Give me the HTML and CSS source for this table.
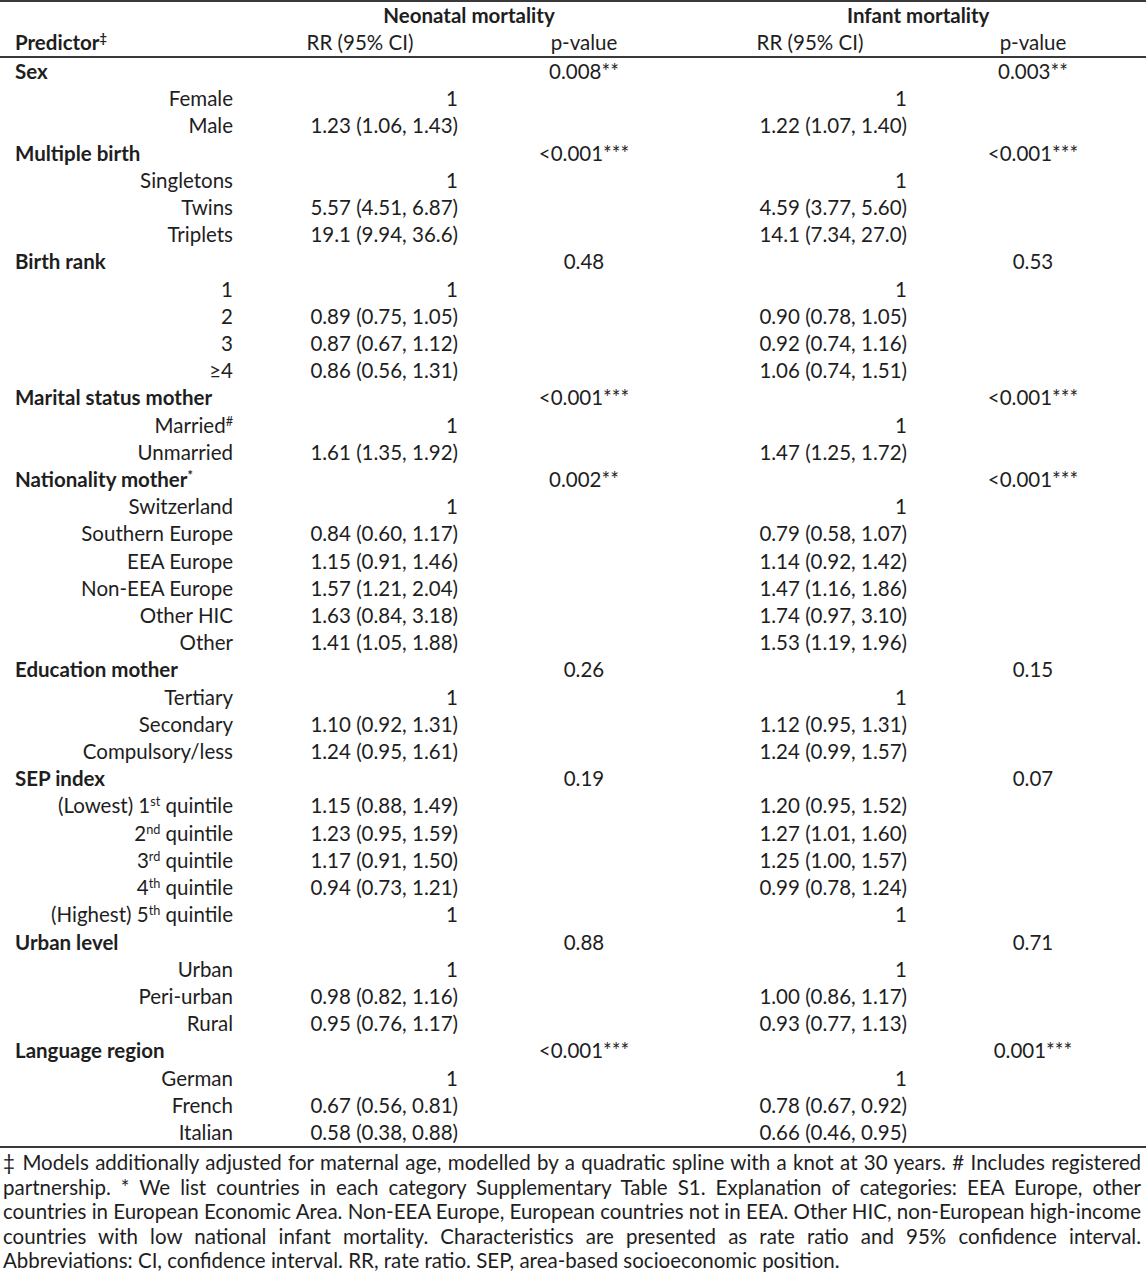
FILE: index.html
```html
<!DOCTYPE html>
<html lang="en">
<head>
<meta charset="utf-8">
<title>Rate ratios for neonatal and infant mortality</title>
<link rel="stylesheet" href="styles.css">
</head>
<body>
<table class="rr-table">
  <colgroup>
    <col class="c-label">
    <col class="c-rr1">
    <col class="c-p1">
    <col class="c-rr2">
    <col class="c-p2">
    <col class="c-rest">
  </colgroup>
  <thead>
    <tr class="group-row">
      <th></th>
      <th colspan="2" class="group g1">Neonatal mortality</th>
      <th colspan="3" class="group g2">Infant mortality</th>
    </tr>
    <tr class="head-row">
      <th class="pred">Predictor<sup>‡</sup></th>
      <th class="hc">RR (95% CI)</th>
      <th class="hc">p-value</th>
      <th class="hc">RR (95% CI)</th>
      <th class="hc">p-value</th>
      <th></th>
    </tr>
  </thead>
  <tbody>
    <tr class="cat"><td>Sex</td><td></td><td class="p">0.008**</td><td></td><td class="p">0.003**</td><td></td></tr>
    <tr><td class="lvl">Female</td><td class="rr">1</td><td></td><td class="rr2">1</td><td></td><td></td></tr>
    <tr><td class="lvl">Male</td><td class="rr">1.23 (1.06, 1.43)</td><td></td><td class="rr2">1.22 (1.07, 1.40)</td><td></td><td></td></tr>

    <tr class="cat"><td>Multiple birth</td><td></td><td class="p">&lt;0.001***</td><td></td><td class="p">&lt;0.001***</td><td></td></tr>
    <tr><td class="lvl">Singletons</td><td class="rr">1</td><td></td><td class="rr2">1</td><td></td><td></td></tr>
    <tr><td class="lvl">Twins</td><td class="rr">5.57 (4.51, 6.87)</td><td></td><td class="rr2">4.59 (3.77, 5.60)</td><td></td><td></td></tr>
    <tr><td class="lvl">Triplets</td><td class="rr">19.1 (9.94, 36.6)</td><td></td><td class="rr2">14.1 (7.34, 27.0)</td><td></td><td></td></tr>

    <tr class="cat"><td>Birth rank</td><td></td><td class="p">0.48</td><td></td><td class="p">0.53</td><td></td></tr>
    <tr><td class="lvl">1</td><td class="rr">1</td><td></td><td class="rr2">1</td><td></td><td></td></tr>
    <tr><td class="lvl">2</td><td class="rr">0.89 (0.75, 1.05)</td><td></td><td class="rr2">0.90 (0.78, 1.05)</td><td></td><td></td></tr>
    <tr><td class="lvl">3</td><td class="rr">0.87 (0.67, 1.12)</td><td></td><td class="rr2">0.92 (0.74, 1.16)</td><td></td><td></td></tr>
    <tr><td class="lvl">≥4</td><td class="rr">0.86 (0.56, 1.31)</td><td></td><td class="rr2">1.06 (0.74, 1.51)</td><td></td><td></td></tr>

    <tr class="cat"><td>Marital status mother</td><td></td><td class="p">&lt;0.001***</td><td></td><td class="p">&lt;0.001***</td><td></td></tr>
    <tr><td class="lvl">Married<sup>#</sup></td><td class="rr">1</td><td></td><td class="rr2">1</td><td></td><td></td></tr>
    <tr><td class="lvl">Unmarried</td><td class="rr">1.61 (1.35, 1.92)</td><td></td><td class="rr2">1.47 (1.25, 1.72)</td><td></td><td></td></tr>

    <tr class="cat"><td>Nationality mother<sup>*</sup></td><td></td><td class="p">0.002**</td><td></td><td class="p">&lt;0.001***</td><td></td></tr>
    <tr><td class="lvl">Switzerland</td><td class="rr">1</td><td></td><td class="rr2">1</td><td></td><td></td></tr>
    <tr><td class="lvl">Southern Europe</td><td class="rr">0.84 (0.60, 1.17)</td><td></td><td class="rr2">0.79 (0.58, 1.07)</td><td></td><td></td></tr>
    <tr><td class="lvl">EEA Europe</td><td class="rr">1.15 (0.91, 1.46)</td><td></td><td class="rr2">1.14 (0.92, 1.42)</td><td></td><td></td></tr>
    <tr><td class="lvl">Non-EEA Europe</td><td class="rr">1.57 (1.21, 2.04)</td><td></td><td class="rr2">1.47 (1.16, 1.86)</td><td></td><td></td></tr>
    <tr><td class="lvl">Other HIC</td><td class="rr">1.63 (0.84, 3.18)</td><td></td><td class="rr2">1.74 (0.97, 3.10)</td><td></td><td></td></tr>
    <tr><td class="lvl">Other</td><td class="rr">1.41 (1.05, 1.88)</td><td></td><td class="rr2">1.53 (1.19, 1.96)</td><td></td><td></td></tr>

    <tr class="cat"><td>Education mother</td><td></td><td class="p">0.26</td><td></td><td class="p">0.15</td><td></td></tr>
    <tr><td class="lvl">Tertiary</td><td class="rr">1</td><td></td><td class="rr2">1</td><td></td><td></td></tr>
    <tr><td class="lvl">Secondary</td><td class="rr">1.10 (0.92, 1.31)</td><td></td><td class="rr2">1.12 (0.95, 1.31)</td><td></td><td></td></tr>
    <tr><td class="lvl">Compulsory/less</td><td class="rr">1.24 (0.95, 1.61)</td><td></td><td class="rr2">1.24 (0.99, 1.57)</td><td></td><td></td></tr>

    <tr class="cat"><td>SEP index</td><td></td><td class="p">0.19</td><td></td><td class="p">0.07</td><td></td></tr>
    <tr><td class="lvl">(Lowest) 1<sup>st</sup> quintile</td><td class="rr">1.15 (0.88, 1.49)</td><td></td><td class="rr2">1.20 (0.95, 1.52)</td><td></td><td></td></tr>
    <tr><td class="lvl">2<sup>nd</sup> quintile</td><td class="rr">1.23 (0.95, 1.59)</td><td></td><td class="rr2">1.27 (1.01, 1.60)</td><td></td><td></td></tr>
    <tr><td class="lvl">3<sup>rd</sup> quintile</td><td class="rr">1.17 (0.91, 1.50)</td><td></td><td class="rr2">1.25 (1.00, 1.57)</td><td></td><td></td></tr>
    <tr><td class="lvl">4<sup>th</sup> quintile</td><td class="rr">0.94 (0.73, 1.21)</td><td></td><td class="rr2">0.99 (0.78, 1.24)</td><td></td><td></td></tr>
    <tr><td class="lvl">(Highest) 5<sup>th</sup> quintile</td><td class="rr">1</td><td></td><td class="rr2">1</td><td></td><td></td></tr>

    <tr class="cat"><td>Urban level</td><td></td><td class="p">0.88</td><td></td><td class="p">0.71</td><td></td></tr>
    <tr><td class="lvl">Urban</td><td class="rr">1</td><td></td><td class="rr2">1</td><td></td><td></td></tr>
    <tr><td class="lvl">Peri-urban</td><td class="rr">0.98 (0.82, 1.16)</td><td></td><td class="rr2">1.00 (0.86, 1.17)</td><td></td><td></td></tr>
    <tr><td class="lvl">Rural</td><td class="rr">0.95 (0.76, 1.17)</td><td></td><td class="rr2">0.93 (0.77, 1.13)</td><td></td><td></td></tr>

    <tr class="cat"><td>Language region</td><td></td><td class="p">&lt;0.001***</td><td></td><td class="p">0.001***</td><td></td></tr>
    <tr><td class="lvl">German</td><td class="rr">1</td><td></td><td class="rr2">1</td><td></td><td></td></tr>
    <tr><td class="lvl">French</td><td class="rr">0.67 (0.56, 0.81)</td><td></td><td class="rr2">0.78 (0.67, 0.92)</td><td></td><td></td></tr>
    <tr class="last"><td class="lvl">Italian</td><td class="rr">0.58 (0.38, 0.88)</td><td></td><td class="rr2">0.66 (0.46, 0.95)</td><td></td><td></td></tr>
  </tbody>
</table>
<div class="notes">
  <p class="line">‡ Models additionally adjusted for maternal age, modelled by a quadratic spline with a knot at 30 years. # Includes registered</p>
  <p class="line">partnership. * We list countries in each category Supplementary Table S1. Explanation of categories: EEA Europe, other</p>
  <p class="line">countries in European Economic Area. Non-EEA Europe, European countries not in EEA. Other HIC, non-European high-income</p>
  <p class="line">countries with low national infant mortality. Characteristics are presented as rate ratio and 95% confidence interval.</p>
  <p class="line end">Abbreviations: CI, confidence interval. RR, rate ratio. SEP, area-based socioeconomic position.</p>
</div>
</body>
</html>
```
FILE: styles.css
```css
html, body {
  margin: 0;
  padding: 0;
  background: #ffffff;
}

body {
  width: 1146px;
  color: #1e1e1e;
  font-family: "Lato", "Open Sans", sans-serif;
}

.rr-table {
  width: 1146px;
  table-layout: fixed;
  border-collapse: collapse;
  border-top: 2px solid #3a3a3a;
  font-size: 20.5px;
}

.c-label { width: 245px; }
.c-rr1 { width: 230px; }
.c-p1 { width: 218px; }
.c-rr2 { width: 234px; }
.c-p2 { width: 212px; }
.c-rest { width: 7px; }

.rr-table th,
.rr-table td {
  padding: 0;
  line-height: 27.2px;
  height: 27.2px;
  white-space: nowrap;
  vertical-align: middle;
}

.rr-table .group-row th {
  font-weight: 700;
  text-align: center;
  line-height: 27px;
  height: 27px;
}

.rr-table .group.g2 {
  text-align: left;
  text-indent: 154px;
}

.rr-table .head-row th {
  font-weight: 400;
  text-align: center;
  line-height: 27px;
  height: 27px;
  border-bottom: 2px solid #3a3a3a;
}

.rr-table .head-row th.pred {
  text-align: left;
  font-weight: 700;
  padding-left: 15px;
}

.rr-table .cat td:first-child {
  font-weight: 700;
  text-align: left;
  padding-left: 15px;
}

.rr-table td.lvl {
  text-align: right;
  padding-right: 12px;
}

.rr-table td.rr {
  text-align: right;
  padding-right: 17px;
}

.rr-table td.rr2 {
  text-align: right;
  padding-right: 20px;
}

.rr-table td.p {
  text-align: center;
}

.rr-table .last td {
  border-bottom: 2px solid #3a3a3a;
}

sup {
  font-size: 0.62em;
  line-height: 0;
  vertical-align: 0.55em;
}

.notes {
  padding: 2px 5px 0 3px;
  font-size: 20.5px;
}

.line {
  margin: 0;
  line-height: 24.5px;
  white-space: nowrap;
  text-align: justify;
  text-align-last: justify;
}

.line.end {
  text-align-last: left;
}
```
